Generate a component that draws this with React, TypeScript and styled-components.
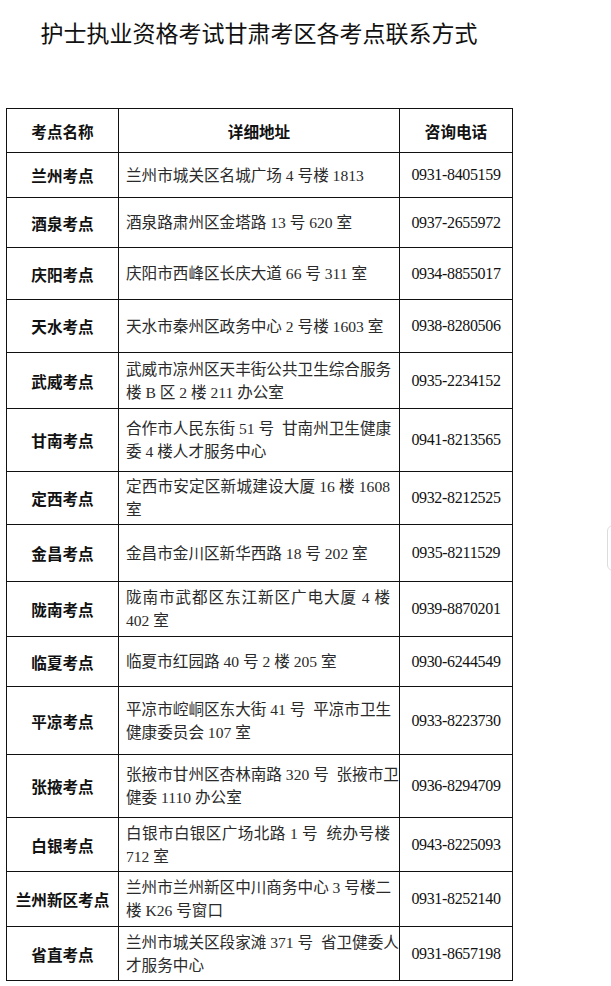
import styled, { createGlobalStyle } from 'styled-components';

const GlobalStyle = createGlobalStyle`
  html, body {
    margin: 0;
    padding: 0;
    background: #ffffff;
  }
  body {
    font-family: "Liberation Serif", "Noto Sans CJK SC", serif;
    color: #111;
  }
`;

const Page = styled.div`
  width: 506px;
  padding: 17px 0 5px 6px;
`;

const Title = styled.h1`
  margin: 0 0 61px;
  font-family: "Noto Sans CJK SC", sans-serif;
  font-size: 23px;
  font-weight: 400;
  line-height: 30px;
  text-align: center;
  color: #111;
  white-space: nowrap;
`;

const Table = styled.table`
  width: 506px;
  border-collapse: collapse;
  table-layout: fixed;
`;

const HeadCell = styled.th`
  border: 1px solid #111;
  padding: 0;
  font-family: "Liberation Serif", "Noto Sans CJK SC", serif;
  font-size: 15.6px;
  font-weight: 700;
  color: #111;
  text-align: center;
  vertical-align: middle;
`;

const Row = styled.tr<{ $h: number }>`
  height: ${({ $h }) => $h}px;
`;

const NameCell = styled.td`
  border: 1px solid #111;
  padding: 0;
  font-size: 15.6px;
  font-weight: 700;
  color: #111;
  text-align: center;
  vertical-align: middle;
  white-space: nowrap;
`;

const AddressCell = styled.td`
  border: 1px solid #111;
  padding: 0 9px 0 7px;
  font-size: 15.6px;
  line-height: 23px;
  color: #2a2a2a;
  vertical-align: middle;
`;

const AddressLine = styled.div<{ $spread?: boolean }>`
  white-space: pre;
  text-align: left;
  text-align-last: ${({ $spread }) => ($spread ? 'justify' : 'left')};
  text-justify: inter-character;
`;

const PhoneCell = styled.td`
  border: 1px solid #111;
  padding: 0;
  font-size: 16px;
  letter-spacing: -0.35px;
  color: #111;
  text-align: center;
  vertical-align: middle;
`;

const SideTab = styled.div`
  position: fixed;
  left: 607px;
  top: 525px;
  width: 24px;
  height: 44px;
  border: 1px solid #dcdcdc;
  border-radius: 6px;
  background: #fff;
`;

type Site = {
  name: string;
  lines: string[];
  phone: string;
  height: number;
};

const sites: Site[] = [
  { name: '兰州考点', lines: ['兰州市城关区名城广场 4 号楼 1813'], phone: '0931-8405159', height: 45 },
  { name: '酒泉考点', lines: ['酒泉路肃州区金塔路 13 号 620 室'], phone: '0937-2655972', height: 50 },
  { name: '庆阳考点', lines: ['庆阳市西峰区长庆大道 66 号 311 室'], phone: '0934-8855017', height: 52 },
  { name: '天水考点', lines: ['天水市秦州区政务中心 2 号楼 1603 室'], phone: '0938-8280506', height: 53 },
  { name: '武威考点', lines: ['武威市凉州区天丰街公共卫生综合服务', '楼 B 区 2 楼 211 办公室'], phone: '0935-2234152', height: 56 },
  { name: '甘南考点', lines: ['合作市人民东街 51 号  甘南州卫生健康', '委 4 楼人才服务中心'], phone: '0941-8213565', height: 63 },
  { name: '定西考点', lines: ['定西市安定区新城建设大厦 16 楼 1608', '室'], phone: '0932-8212525', height: 53 },
  { name: '金昌考点', lines: ['金昌市金川区新华西路 18 号 202 室'], phone: '0935-8211529', height: 57 },
  { name: '陇南考点', lines: ['陇南市武都区东江新区广电大厦 4 楼', '402 室'], phone: '0939-8870201', height: 55 },
  { name: '临夏考点', lines: ['临夏市红园路 40 号 2 楼 205 室'], phone: '0930-6244549', height: 50 },
  { name: '平凉考点', lines: ['平凉市崆峒区东大街 41 号  平凉市卫生', '健康委员会 107 室'], phone: '0933-8223730', height: 68 },
  { name: '张掖考点', lines: ['张掖市甘州区杏林南路 320 号  张掖市卫', '健委 1110 办公室'], phone: '0936-8294709', height: 63 },
  { name: '白银考点', lines: ['白银市白银区广场北路 1 号  统办号楼', '712 室'], phone: '0943-8225093', height: 54 },
  { name: '兰州新区考点', lines: ['兰州市兰州新区中川商务中心 3 号楼二', '楼 K26 号窗口'], phone: '0931-8252140', height: 55 },
  { name: '省直考点', lines: ['兰州市城关区段家滩 371 号  省卫健委人', '才服务中心'], phone: '0931-8657198', height: 54 },
];

export default function App() {
  return (
    <>
      <GlobalStyle />
      <Page>
        <Title>护士执业资格考试甘肃考区各考点联系方式</Title>
        <Table>
          <colgroup>
            <col style={{ width: 112 }} />
            <col style={{ width: 281 }} />
            <col style={{ width: 113 }} />
          </colgroup>
          <thead>
            <Row $h={44}>
              <HeadCell>考点名称</HeadCell>
              <HeadCell>详细地址</HeadCell>
              <HeadCell>咨询电话</HeadCell>
            </Row>
          </thead>
          <tbody>
            {sites.map((s) => (
              <Row key={s.name} $h={s.height}>
                <NameCell>{s.name}</NameCell>
                <AddressCell>
                  {s.lines.map((line, i) => (
                    <AddressLine key={i} $spread={i < s.lines.length - 1}>
                      {line}
                    </AddressLine>
                  ))}
                </AddressCell>
                <PhoneCell>{s.phone}</PhoneCell>
              </Row>
            ))}
          </tbody>
        </Table>
      </Page>
      <SideTab />
    </>
  );
}
